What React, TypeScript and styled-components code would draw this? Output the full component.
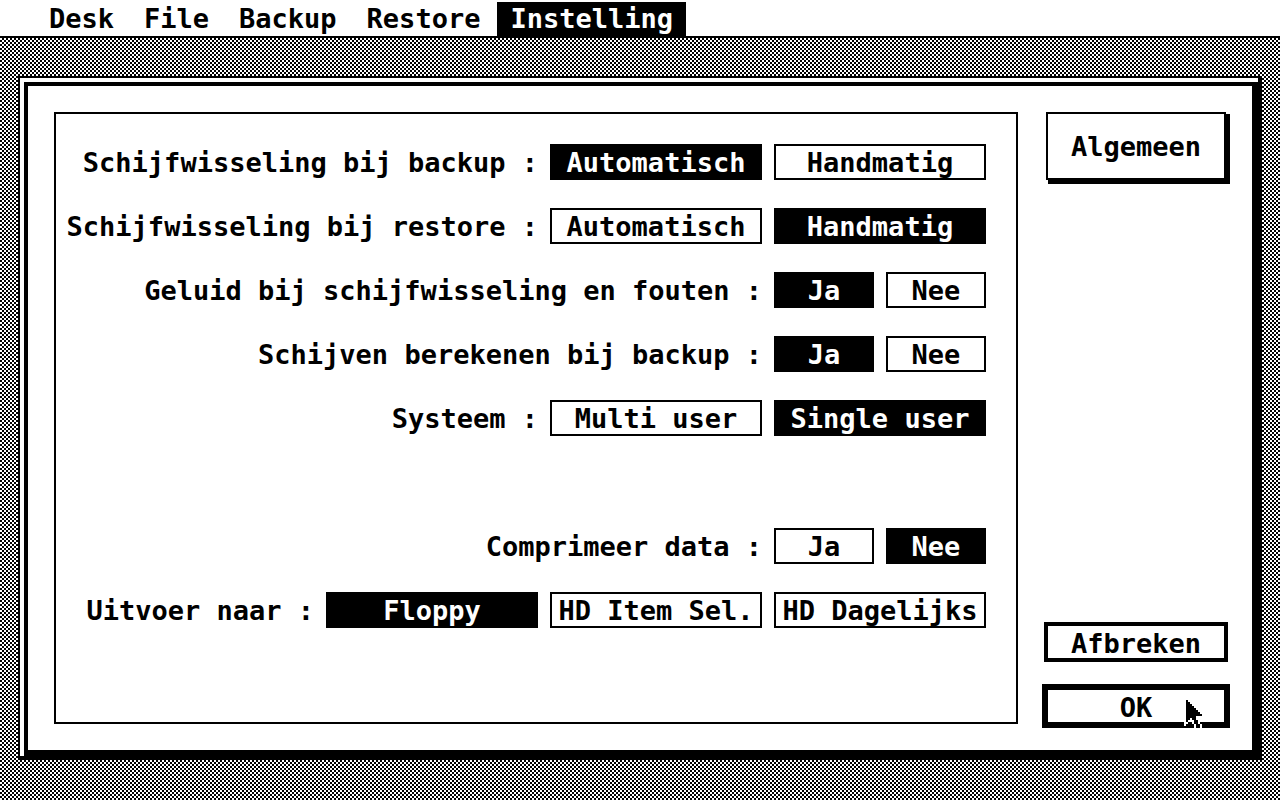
import React from 'react';
import styled, { createGlobalStyle } from 'styled-components';

const GlobalStyle = createGlobalStyle`
  *, *::before, *::after { box-sizing: border-box; }
  body { margin: 0; }
  body, button, input {
    font-family: "DejaVu Sans Mono", "Liberation Mono", monospace;
    font-size: 27px;
    font-weight: 700;
    line-height: 32px;
    color: #000;
  }
`;

const Desktop = styled.div`
  display: flex;
  flex-direction: column;
  min-height: 100vh;
  background: repeating-conic-gradient(#fff 0 25%, #000 0 50%) 0 0 / 4px 4px;
`;

const MenuBar = styled.nav`
  display: flex;
  gap: 4px;
  height: 38px;
  padding: 2px 0 0 36px;
  background: #fff;
  border-bottom: 2px solid #000;
`;

const MenuItem = styled.button<{ $open?: boolean }>`
  height: 34px;
  padding: 0 13px;
  border: 0;
  background: ${p => (p.$open ? '#000' : '#fff')};
  color: ${p => (p.$open ? '#fff' : '#000')};
`;

const DialogFrame = styled.main`
  flex: 1;
  display: flex;
  margin: 38px 20px 42px 18px;
  padding: 4px 0 0 4px;
  border: 2px solid #000;
  background: #fff;
  box-shadow: 2px 2px 0 #000;
`;

const Dialog = styled.form`
  flex: 1;
  display: flex;
  gap: 24px;
  min-width: 0;
  padding: 26px 22px 22px 26px;
  border: 4px solid #000;
  border-right-width: 6px;
  border-bottom-width: 6px;
`;

const Panel = styled.div`
  flex: 1;
  display: flex;
  flex-direction: column;
  gap: 28px;
  min-width: 0;
  margin-bottom: 4px;
  padding: 30px 30px 30px 8px;
  border: 2px solid #000;
`;

const Row = styled.fieldset<{ $spaced?: boolean }>`
  display: flex;
  justify-content: flex-end;
  align-items: center;
  gap: 12px;
  height: 36px;
  min-width: 0;
  margin: ${p => (p.$spaced ? '64px 0 0' : '0')};
  padding: 0;
  border: 0;
`;

const Caption = styled.span`
  padding-top: 2px;
  white-space: pre;
`;

const Choice = styled.label<{ $short?: boolean }>`
  display: flex;
  justify-content: center;
  align-items: center;
  flex: none;
  width: ${p => (p.$short ? '100px' : '212px')};
  height: 36px;
  padding-top: 2px;
  border: 2px solid #000;
  background: #fff;
  white-space: nowrap;
  &:has(input:checked) { background: #000; color: #fff; }
`;

const Radio = styled.input`
  appearance: none;
  position: absolute;
  margin: 0;
  width: 1px;
  height: 1px;
  opacity: 0;
`;

const Side = styled.div`
  display: flex;
  flex-direction: column;
  align-items: center;
  flex: none;
  width: 188px;
`;

const SideButton = styled.button`
  padding: 2px 0 0;
  background: #fff;
  border: 2px solid #000;
`;

const PageButton = styled(SideButton)`
  width: 180px;
  height: 68px;
  box-shadow: 4px 2px 0 #000, 2px 4px 0 #000, 4px 4px 0 #000;
`;

const CancelButton = styled(SideButton)`
  width: 184px;
  height: 40px;
  margin-top: auto;
  border-width: 4px;
`;

const OkButton = styled(SideButton)`
  position: relative;
  width: 188px;
  height: 44px;
  margin-top: 22px;
  border-width: 6px;
`;

const Pointer = styled.svg`
  position: absolute;
  top: 8px;
  right: 8px;
  width: 32px;
  height: 32px;
  pointer-events: none;
`;

/* One 16-bit word per pixel row: the white outline, then the black arrow. */
const pointerMask = [
  0xc000, 0xe000, 0xf000, 0xf800, 0xfc00, 0xfe00, 0xff00, 0xff80,
  0xffc0, 0xffc0, 0xfe00, 0xef00, 0xcf00, 0x8780, 0x0780, 0x0000,
];
const pointerInk = [
  0x0000, 0x4000, 0x6000, 0x7000, 0x7800, 0x7c00, 0x7e00, 0x7f00,
  0x7f80, 0x7c00, 0x6c00, 0x4600, 0x0600, 0x0300, 0x0300, 0x0000,
];

const bitmapPath = (rows: number[]) =>
  rows
    .map((bits, y) =>
      Array.from({ length: 16 }, (_, x) => (bits & (0x8000 >> x) ? `M${x} ${y}h1v1h-1z` : '')).join(''),
    )
    .join('');

type Setting = { name: string; caption: string; options: string[]; value: string; spaced?: boolean };

const settings: Setting[] = [
  { name: 'backup', caption: 'Schijfwisseling bij backup :', options: ['Automatisch', 'Handmatig'], value: 'Automatisch' },
  { name: 'restore', caption: 'Schijfwisseling bij restore :', options: ['Automatisch', 'Handmatig'], value: 'Handmatig' },
  { name: 'sound', caption: 'Geluid bij schijfwisseling en fouten :', options: ['Ja', 'Nee'], value: 'Ja' },
  { name: 'count', caption: 'Schijven berekenen bij backup :', options: ['Ja', 'Nee'], value: 'Ja' },
  { name: 'system', caption: 'Systeem :', options: ['Multi user', 'Single user'], value: 'Single user' },
  { name: 'compress', caption: 'Comprimeer data :', options: ['Ja', 'Nee'], value: 'Nee', spaced: true },
  { name: 'output', caption: 'Uitvoer naar :', options: ['Floppy', 'HD Item Sel.', 'HD Dagelijks'], value: 'Floppy' },
];

const menus = ['Desk', 'File', 'Backup', 'Restore', 'Instelling'];

export default function App() {
  return (
    <Desktop>
      <GlobalStyle />
      <MenuBar>
        {menus.map(m => <MenuItem key={m} type="button" $open={m === 'Instelling'}>{m}</MenuItem>)}
      </MenuBar>
      <DialogFrame>
        <Dialog onSubmit={e => e.preventDefault()}>
          <Panel>
            {settings.map(s => (
              <Row key={s.name} $spaced={s.spaced} aria-labelledby={`${s.name}-caption`}>
                <Caption id={`${s.name}-caption`}>{s.caption}</Caption>
                {s.options.map(o => (
                  <Choice key={o} $short={o.length < 4}>
                    <Radio type="radio" name={s.name} value={o} defaultChecked={o === s.value} />
                    {o}
                  </Choice>
                ))}
              </Row>
            ))}
          </Panel>
          <Side>
            <PageButton type="button">Algemeen</PageButton>
            <CancelButton type="button">Afbreken</CancelButton>
            <OkButton type="submit">
              OK
              <Pointer viewBox="0 0 16 16" shapeRendering="crispEdges" aria-hidden="true">
                <path d={bitmapPath(pointerMask)} fill="#fff" />
                <path d={bitmapPath(pointerInk)} fill="#000" />
              </Pointer>
            </OkButton>
          </Side>
        </Dialog>
      </DialogFrame>
    </Desktop>
  );
}
